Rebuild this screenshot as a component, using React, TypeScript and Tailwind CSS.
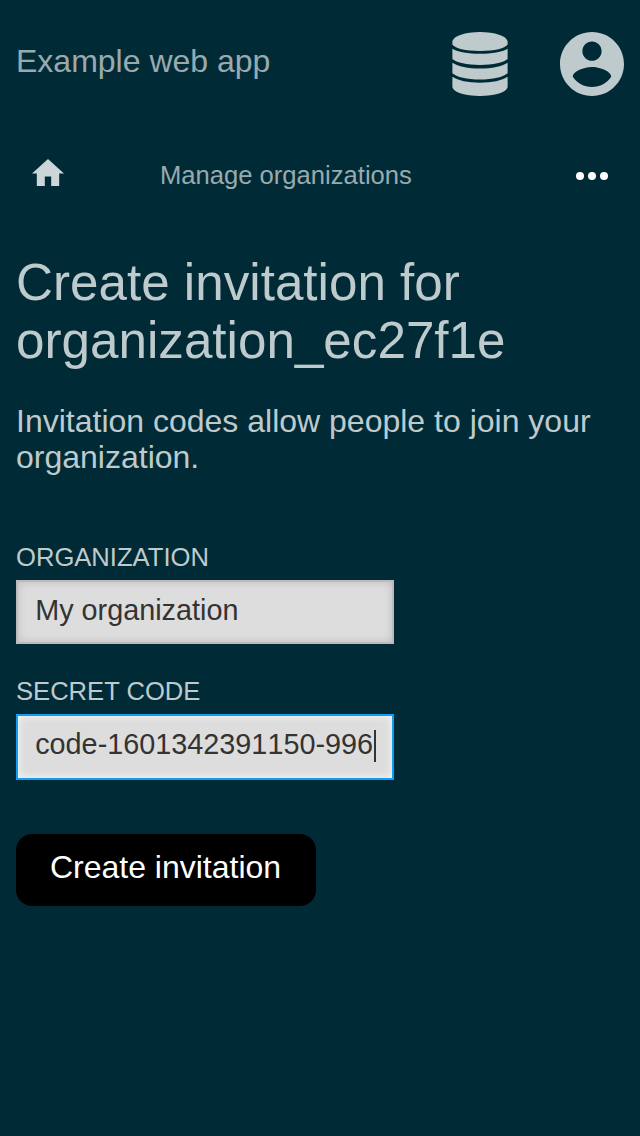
function DatabaseIcon() {
  return (
    <svg viewBox="0 0 64 64" className="h-[64px] w-[64px] fill-[#bfcacd]">
      <path d="M4.400 9.300C5.500 4 17 0 32 0s26.500 4 27.600 9.300v3.200C57.500 16.200 46.500 19 32 19S6.500 16.200 4.400 12.500z" />
      <path d="M4.400 16.700C10 20 20 21.800 32 21.800S54 20 59.600 16.700v10.400C55.500 30.700 45 33 32 33S8.500 30.700 4.400 27.100z" />
      <path d="M4.400 30.700C10 34.400 20 36.600 32 36.600S54 34.400 59.600 30.700v10.500C55.500 45 45 47.500 32 47.500S8.500 45 4.400 41.200z" />
      <path d="M4.400 44.800C10 48.600 20 50.700 32 50.700S54 48.600 59.600 44.800v10.500C58.500 60.500 47 64 32 64S5.500 60.500 4.400 55.300z" />
    </svg>
  );
}

function AccountIcon() {
  return (
    <svg viewBox="2 2 20 20" className="ml-[48px] h-[64px] w-[64px] fill-[#bfcacd]">
      <path d="M12 2C6.480 2 2 6.480 2 12s4.480 10 10 10 10-4.480 10-10S17.520 2 12 2zm0 3c1.660 0 3 1.340 3 3s-1.340 3-3 3-3-1.340-3-3 1.340-3 3-3zm0 14.200c-2.500 0-4.710-1.280-6-3.220.030-1.990 4-3.080 6-3.080 1.990 0 5.970 1.090 6 3.080-1.290 1.940-3.500 3.220-6 3.220z" />
    </svg>
  );
}

function HomeIcon() {
  return (
    <svg viewBox="2 3 20 17" className="mb-[7px] h-[27.2px] w-[32px] fill-[#ccd5d7]">
      <path d="M10 20v-6h4v6h5v-8h3L12 3 2 12h3v8z" />
    </svg>
  );
}

function Field({ id, label, value, focused = false }: { id: string; label: string; value: string; focused?: boolean }) {
  return (
    <div className="flex flex-col">
      <label htmlFor={id} className="text-[25.6px] leading-[30px] text-[#bfcacd]">{label}</label>
      <div
        id={id}
        className={
          focused
            ? "mt-[8px] flex h-[66px] w-[378px] items-center border-2 border-[#139df0] bg-[#dddddd] pb-[6px] pl-[17.2px] shadow-[inset_0_0_8px_rgba(255,255,255,0.8)]"
            : "mt-[8px] flex h-[64px] w-[378px] items-center border-2 border-[#bbbbbb] bg-[#dddddd] pb-[4px] pl-[17.2px] shadow-[inset_0_0_8px_rgba(0,0,0,0.15)]"
        }
      >
        <span className="text-[28.8px] leading-[34px] whitespace-nowrap text-[#333333] [font-kerning:none]">{value}</span>
        {focused && <span className="relative top-[2px] ml-[0.8px] h-[32px] w-[2px] bg-[#333333]" />}
      </div>
    </div>
  );
}

export default function App() {
  return (
    <div className="min-h-[1136px] w-[640px] bg-[#002b36] font-['Liberation_Sans',sans-serif] text-[#bfcacd]">
      <header className="flex h-[128px] items-center px-[16px]">
        <span className="mb-[6px] flex-1 text-[32px] leading-[36px] text-[#99aaaf]">Example web app</span>
        <DatabaseIcon />
        <AccountIcon />
      </header>
      <nav className="flex h-[96px] items-center px-[32px]">
        <HomeIcon />
        <span className="mb-[2px] ml-[96px] flex-1 text-[25.6px] leading-[30px] text-[#99aaaf]">Manage organizations</span>
        <svg viewBox="0 0 32 8" className="h-[8px] w-[32px] fill-white">
          <circle cx="4" cy="4" r="4" /><circle cx="16" cy="4" r="4" /><circle cx="28" cy="4" r="4" />
        </svg>
      </nav>
      <main className="px-[16px] pt-[30px]">
        <h1 className="text-[51.2px] leading-[58px]">Create invitation for<br />organization_ec27f1e</h1>
        <p className="mt-[33px] text-[32px] leading-[36px]">Invitation codes allow people to join your organization.</p>
        <form className="mt-[67px] flex flex-col items-start">
          <Field id="organization" label="ORGANIZATION" value="My organization" />
          <div className="h-[32px]" />
          <Field id="code" label="SECRET CODE" value="code-1601342391150-996" focused />
          <button type="button" className="mt-[54px] h-[72px] w-[300px] rounded-[16px] bg-black pr-[1px] pb-[6px] text-[32px] leading-[36px] text-white">Create invitation</button>
        </form>
      </main>
    </div>
  );
}
